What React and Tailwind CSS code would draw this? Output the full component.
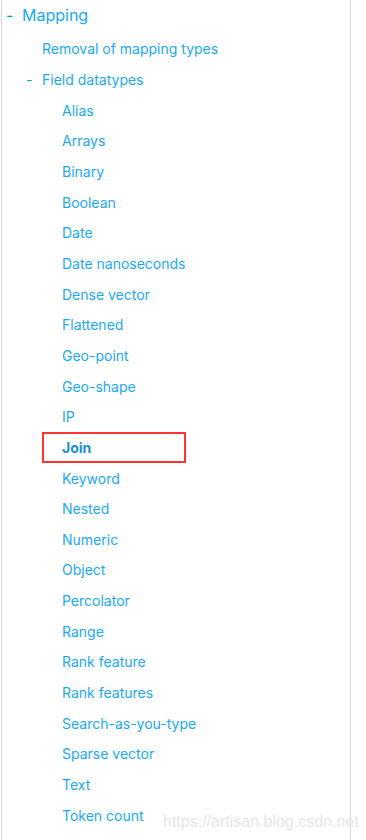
export default function App() {
  const items = [
    'Alias', 'Arrays', 'Binary', 'Boolean', 'Date', 'Date nanoseconds', 'Dense vector',
    'Flattened', 'Geo-point', 'Geo-shape', 'IP', 'Join', 'Keyword', 'Nested', 'Numeric',
    'Object', 'Percolator', 'Range', 'Rank feature', 'Rank features', 'Search-as-you-type',
    'Sparse vector', 'Text', 'Token count',
  ];

  return (
    <div className="relative h-[840px] w-[366px] overflow-hidden bg-white font-['Inter',sans-serif]">
      <div className="ml-[1px] h-full w-[350px] border-x border-[#d9d9d9]">
        <div className="flex h-[29px] items-center text-[16px] text-[#1ba9f5]">
          <span className="w-[20px] pl-[4px] text-[#00a9a5]">-</span>
          <span>Mapping</span>
        </div>
        <div className="flex h-[38px] items-center pl-[40px] text-[14px] text-[#1ba9f5]">
          Removal of mapping types
        </div>
        <div className="flex h-[24px] items-center text-[14px] text-[#1ba9f5]">
          <span className="w-[40px] pl-[24px] text-[#00a9a5]">-</span>
          <span>Field datatypes</span>
        </div>
        <ul className="mt-[4px] flex flex-col">
          {items.map((name) => (
            <li key={name} className="flex h-[30.65px] items-center pl-[40px] text-[14px]">
              {name === 'Join' ? (
                <span className="flex h-[31px] w-[144px] items-center border-2 border-[#f33] pl-[18px] font-bold text-[#1a8fd6]">
                  Join
                </span>
              ) : (
                <span className="pl-[20px] text-[#1ba9f5]">{name}</span>
              )}
            </li>
          ))}
        </ul>
      </div>
      <div className="absolute left-[163px] top-[810px] font-['Liberation_Sans',sans-serif] text-[16px] text-[#e6e6e6]">
        https://artisan.blog.csdn.net
      </div>
    </div>
  );
}
